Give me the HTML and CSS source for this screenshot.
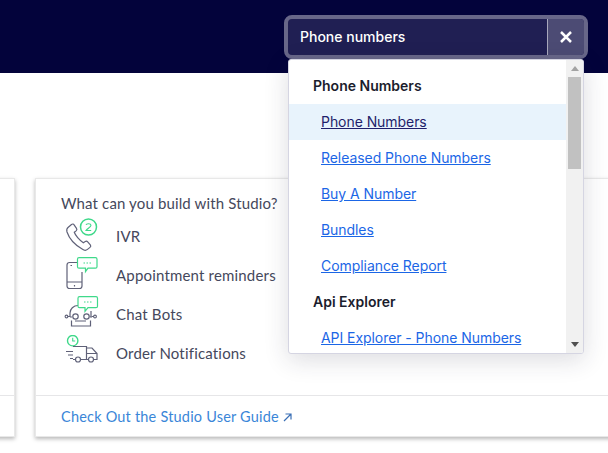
FILE: index.html
```html
<!DOCTYPE html>
<html lang="en">
<head>
<meta charset="utf-8">
<title>Studio</title>
<link rel="stylesheet" href="styles.css">
</head>
<body>
<header class="topbar">
  <div class="search">
    <div class="search-input">Phone numbers</div>
    <button class="search-clear" aria-label="Clear">
      <svg width="12" height="12" viewBox="0 0 12 12"><path d="M1 1l10 10M11 1L1 11" stroke="#fff" stroke-width="2.500" fill="none"/></svg>
    </button>
  </div>
  <div class="dropdown">
    <div class="results">
      <div class="group">Phone Numbers</div>
      <a class="item active" href="#">Phone Numbers</a>
      <a class="item" href="#">Released Phone Numbers</a>
      <a class="item" href="#">Buy A Number</a>
      <a class="item" href="#">Bundles</a>
      <a class="item" href="#">Compliance Report</a>
      <div class="group">Api Explorer</div>
      <a class="item" href="#">API Explorer - Phone Numbers</a>
    </div>
    <div class="scrollbar">
      <svg class="arrow" width="8" height="5" viewBox="0 0 8 5"><path d="M4 0l4 5H0z" fill="#a3a3a3"/></svg>
      <div class="thumb"></div>
      <svg class="arrow arrow-down" width="8" height="5" viewBox="0 0 8 5"><path d="M0 0h8L4 5z" fill="#505050"/></svg>
    </div>
  </div>
</header>
<main class="cards">
  <section class="card card-left">
    <div class="card-body"></div>
    <div class="card-foot"></div>
  </section>
  <section class="card card-right">
    <div class="card-body">
      <p class="lead">What can you build with Studio?</p>
      <ul class="uses">
        <li class="use">
          <svg class="icon" width="40" height="36" viewBox="0 0 40 36" fill="none">
            <path d="M7 9.500l3.500-3c1-.8 2-.6 2.600.3l2.400 3.600c.6.9.4 1.800-.4 2.500l-1.800 1.400c1 3 5 8 9 10.400l1.900-1.200c.9-.6 1.800-.5 2.500.3l2.600 3c.7.9.6 1.900-.3 2.600l-2.500 2c-1.500 1.200-3.500 1-5-.1C14 27 8 20 6 14c-.5-1.800-.2-3.500 1-4.500z" stroke="#5f6178" stroke-width="1.200"/>
            <circle cx="27.500" cy="9" r="8" stroke="#3fd98a" stroke-width="1.500"/>
            <path d="M25 7c.4-1.800 4.800-1.800 5 .3.100 1.600-3.800 3.400-5 5.200h5.200" stroke="#3fd98a" stroke-width="1.100"/>
          </svg>
          <span>IVR</span>
        </li>
        <li class="use">
          <svg class="icon" width="40" height="36" viewBox="0 0 40 36" fill="none">
            <path d="M21 15v10M21 25v4c0 1.500-1 2.500-2.500 2.500h-10C7 31.500 6 30.500 6 29V8c0-1.500 1-2.500 2.500-2.500H16M6 25h15M9.500 8.500h1.500M13.500 28v1.500" stroke="#5f6178" stroke-width="1.200"/>
            <path d="M18 .7h16.500c1 0 1.500.5 1.500 1.500v7.500c0 1-.5 1.500-1.500 1.500H27l-2.500 3.500V11.200H18c-1 0-1.500-.5-1.500-1.500V2.200c0-1 .5-1.500 1.500-1.500z" stroke="#3fd98a" stroke-width="1.200" fill="#fff"/>
            <path d="M22.500 6h1.500M25.500 6h1.500M28.500 6h1.500" stroke="#3fd98a" stroke-width="1.100"/>
          </svg>
          <span>Appointment reminders</span>
        </li>
        <li class="use">
          <svg class="icon" width="40" height="36" viewBox="0 0 40 36" fill="none">
            <path d="M17 9.500c-4.500 0-8 3.500-8 7.500v4M30 15v6M10.500 24.500v5.500h19v-5.500M9 21h2M29 21h2M6.500 20.500H9M31 20.500h2M14 25h11" stroke="#5f6178" stroke-width="1.200"/>
            <circle cx="14.500" cy="20.500" r="2.700" stroke="#5f6178" stroke-width="1.200"/>
            <circle cx="25.500" cy="20.500" r="2.700" stroke="#5f6178" stroke-width="1.200"/>
            <circle cx="5.500" cy="20.500" r="1.400" stroke="#5f6178" stroke-width="1.100"/>
            <circle cx="34" cy="20.500" r="1.400" stroke="#5f6178" stroke-width="1.100"/>
            <path d="M18.500.7h16.500c1 0 1.500.5 1.500 1.500v8c0 1-.5 1.500-1.500 1.500h-8l-3 3.700v-3.700h-5.500c-1 0-1.500-.5-1.500-1.500v-8c0-1 .5-1.500 1.500-1.500z" stroke="#3fd98a" stroke-width="1.200" fill="#fff"/>
            <path d="M23 6h1.500M26 6h1.500M29 6h1.500" stroke="#3fd98a" stroke-width="1.100"/>
          </svg>
          <span>Chat Bots</span>
        </li>
        <li class="use">
          <svg class="icon" width="40" height="36" viewBox="0 0 40 36" fill="none">
            <circle cx="11.700" cy="5.700" r="5.200" stroke="#3fd98a" stroke-width="1.400" fill="#fff"/>
            <path d="M11.700 2.700v3.300h2.500" stroke="#3fd98a" stroke-width="1.100"/>
            <path d="M12 11.500h13.500V24M25.500 13h5.500l5 5.500V24.500h-3.500M25.500 18.500h10.500M12 24.500h2.500M19.500 24.500h8M5 16.500h7M7 20h5M9 23.500h3" stroke="#5f6178" stroke-width="1.200"/>
            <circle cx="17" cy="24.500" r="2.500" stroke="#5f6178" stroke-width="1.200"/>
            <circle cx="30" cy="24.500" r="2.500" stroke="#5f6178" stroke-width="1.200"/>
          </svg>
          <span>Order Notifications</span>
        </li>
      </ul>
    </div>
    <div class="card-foot">
      <a class="guide" href="#">Check Out the Studio User Guide
        <svg width="9" height="9" viewBox="0 0 9 9" fill="none"><path d="M1 8l6.500-6.500M2.500 1h5.500v5.500" stroke="#3a6fb5" stroke-width="1.200"/></svg>
      </a>
    </div>
  </section>
</main>
</body>
</html>
```
FILE: styles.css
```css
* { box-sizing: border-box; }
html, body { margin: 0; padding: 0; height: 100%; overflow: hidden; background: #fff; }
body { font-family: "Lato", "Open Sans", sans-serif; color: #45485c; width: 608px; height: 453px; }

.topbar { position: relative; height: 73px; background: #03033b; display: flex; justify-content: flex-end; padding: 15px 20px 0 0; }
.search { width: 304px; height: 44px; border: 4px solid #686789; border-radius: 8px; background: #201f53; display: flex; overflow: hidden; }
.search-input { flex: 1; padding-left: 12px; font: 500 14px/36px "Inter", sans-serif; color: #fff; }
.search-clear { width: 37px; padding: 0 1px 0 0; border: 0; border-left: 1px solid #a8a8bc; background: #4c4b74; display: flex; align-items: center; justify-content: center; }

.dropdown { position: absolute; left: 288px; top: 59px; width: 296px; height: 295px; background: #fff; border: 1px solid #d5d5e2; border-radius: 3px; box-shadow: 0 6px 24px rgba(40,40,60,.16); display: flex; overflow: hidden; z-index: 2; }
.results { flex: 1; padding-top: 8px; min-width: 0; }
.group { height: 36px; padding-left: 24px; font: 600 14px/36px "Inter", sans-serif; color: #1b1d2d; }
.item { display: block; height: 36px; padding-left: 32px; font: 400 14px/36px "Inter", sans-serif; letter-spacing: -.06px; color: #1b66e6; text-decoration: underline; }
.item.active { background: #e8f3fc; color: #1f1f6b; }
.scrollbar { width: 17px; background: #f1f1f1; display: flex; flex-direction: column; align-items: center; padding: 6px 2px; }
.thumb { width: 13px; height: 92px; margin-top: 6px; background: #c1c1c1; }
.arrow { flex: none; }
.arrow-down { margin-top: auto; }

.cards { display: flex; gap: 20px; margin: 105px 0 0 -200px; width: 1000px; }
.card { height: 259px; background: #fff; border: 1px solid #e8e8e8; box-shadow: 0 2px 4px rgba(0,0,0,.28); display: flex; flex-direction: column; }
.card-left { width: 215px; }
.card-right { width: 700px; }
.card-body { height: 216px; padding: 15px 0 0 25px; }
.card-foot { flex: 1; border-top: 1px solid #e6e6e8; padding: 10px 0 0 25px; }
.lead { margin: 0 0 4px; font-size: 15px; line-height: 18px; letter-spacing: .14px; }
.uses { list-style: none; margin: 0; padding: 0; }
.use { height: 39px; display: flex; align-items: center; font-size: 15px; letter-spacing: .18px; }
.icon { flex: none; margin-right: 15px; }
.guide { font-size: 14.500px; line-height: 18px; letter-spacing: .2px; color: #3a86d8; text-decoration: none; }
```
